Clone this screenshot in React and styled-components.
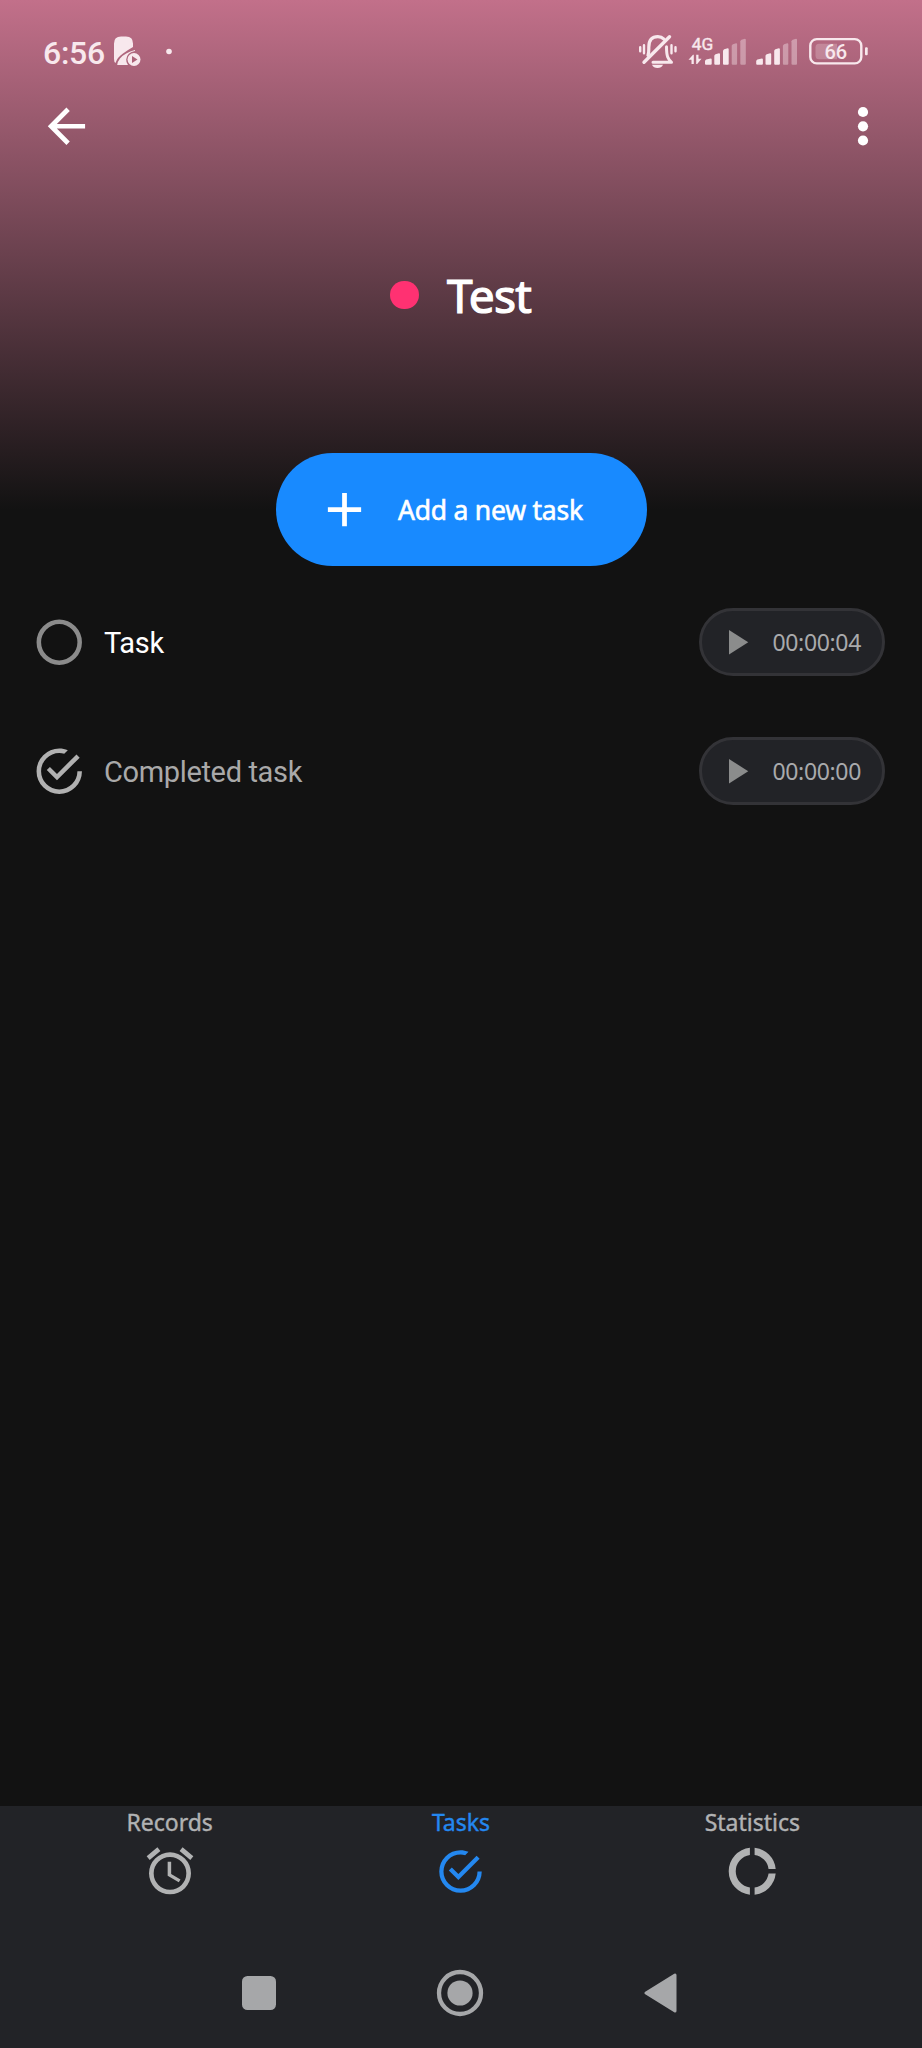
import React from "react";
import styled, { createGlobalStyle } from "styled-components";

const GlobalStyle = createGlobalStyle`
  * { box-sizing: border-box; }
  body { margin: 0; background: #121212; }
  svg { display: block; flex: none; }
`;

const sans = `"Noto Sans", "Open Sans", sans-serif`;
const roboto = `Roboto, "Liberation Sans", sans-serif`;

const Screen = styled.div`
  width: 922px;
  height: 2048px;
  display: flex;
  flex-direction: column;
  overflow: hidden;
  background: linear-gradient(#c2708a 0, #121212 510px);
  font-family: ${sans};
`;

const StatusBar = styled.header`
  height: 102px;
  padding: 0 53px 0 43px;
  display: flex;
  align-items: center;
  justify-content: space-between;
`;

const StatusGroup = styled.div`
  display: flex;
  align-items: center;
`;

const Clock = styled.span`
  width: 71px;
  font: 500 32px/40px ${roboto};
  letter-spacing: -0.3px;
  color: #f8e8ed;
  padding-top: 3px;
`;

const StatusText = styled.text`
  font-family: ${roboto};
  font-size: ${(p) => p.$size}px;
  font-weight: ${(p) => p.$weight};
  fill: #f8e8ed;
`;

const AppBar = styled.nav`
  height: 48px;
  padding: 0 31px 0 38px;
  display: flex;
  align-items: center;
  justify-content: space-between;
`;

const IconButton = styled.button`
  display: flex;
  padding: 0;
  border: 0;
  background: none;
  color: #fff;
`;

const TitleRow = styled.div`
  height: 290px;
  margin-bottom: 13px;
  display: flex;
  align-items: center;
  padding-left: 390px;
  gap: 28.5px;
`;

const ProjectDot = styled.span`
  width: 28.5px;
  height: 28.5px;
  border-radius: 50%;
  background: #ff3172;
`;

const Title = styled.h1`
  margin: 0;
  font-size: 46px;
  line-height: 60px;
  font-weight: 400;
  letter-spacing: -0.7px;
  color: #fff;
  -webkit-text-stroke: 1.2px #fff;
`;

const AddButton = styled.button`
  align-self: center;
  width: 371px;
  height: 113px;
  padding: 0 0 0 40px;
  display: flex;
  align-items: center;
  gap: 25.5px;
  border: 0;
  border-radius: 57px;
  background: #188aff;
  color: #fff;
  font: 400 26.5px/36px ${sans};
  letter-spacing: -0.22px;
  -webkit-text-stroke: 0.6px #fff;
`;

const TaskList = styled.ul`
  flex: 1;
  list-style: none;
  margin: 0;
  padding: 12px 37px 0 32px;
`;

const TaskRow = styled.li`
  height: 129px;
  display: flex;
  align-items: center;
`;

const TaskName = styled.span`
  flex: 1;
  margin-left: 17.5px;
  font: 400 29px/36px ${roboto};
  letter-spacing: -0.35px;
  color: ${(p) => (p.$done ? "#a9a9a9" : "#fff")};
`;

const Timer = styled.button`
  width: 186px;
  height: 68px;
  margin-bottom: 1px;
  padding: 0 0 0 13px;
  display: flex;
  align-items: center;
  gap: 15.5px;
  border: 3px solid #333337;
  border-radius: 34px;
  background: #222327;
  color: #a9aaac;
  font: 400 23px/30px ${sans};
  letter-spacing: -0.35px;
`;

const Tabs = styled.nav`
  height: 136px;
  padding: 0 24px;
  display: flex;
  background: #222327;
`;

const Tab = styled.a`
  flex: 1;
  display: flex;
  flex-direction: column;
  align-items: center;
  color: ${(p) => (p.$active ? "#2488f0" : "#b1b2b3")};
`;

const TabLabel = styled.span`
  height: 31px;
  font-size: 23px;
  line-height: 32px;
  -webkit-text-stroke: 0.4px currentColor;
`;

const TabIcon = styled.span`
  height: 68px;
  display: flex;
  align-items: center;
`;

const SystemBar = styled.footer`
  height: 106px;
  padding: 0 245px 5px 242px;
  display: flex;
  align-items: center;
  justify-content: space-between;
  background: #222327;
  color: #a6a7a9;
`;

const paths = {
  back: "M20,11V13H8L13.5,18.5L12.08,19.92L4.16,12L12.08,4.08L13.5,5.5L8,11H20Z",
  plus: "M19,13H13V19H11V13H5V11H11V5H13V11H19V13Z",
  open: "M12,20A8,8 0 0,1 4,12A8,8 0 0,1 12,4A8,8 0 0,1 20,12A8,8 0 0,1 12,20M12,2A10,10 0 0,0 2,12A10,10 0 0,0 12,22A10,10 0 0,0 22,12A10,10 0 0,0 12,2Z",
  done: "M20,12A8,8 0 0,1 12,20A8,8 0 0,1 4,12A8,8 0 0,1 12,4C12.76,4 13.5,4.11 14.2,4.31L15.77,2.74C14.61,2.26 13.34,2 12,2A10,10 0 0,0 2,12A10,10 0 0,0 12,22A10,10 0 0,0 22,12M7.91,10.08L6.5,11.5L11,16L21,6L19.59,4.58L11,13.17L7.91,10.08Z",
  play: "M8,5.14V19.14L19,12.14L8,5.14Z",
  alarm: "M12,20A7,7 0 0,1 5,13A7,7 0 0,1 12,6A7,7 0 0,1 19,13A7,7 0 0,1 12,20M12,4A9,9 0 0,0 3,13A9,9 0 0,0 12,22A9,9 0 0,0 21,13A9,9 0 0,0 12,4M12.5,8H11V14L15.75,16.85L16.5,15.62L12.5,13.25V8M7.88,3.39L6.6,1.86L2,5.71L3.29,7.24L7.88,3.39M22,5.72L17.4,1.86L16.11,3.39L20.71,7.25L22,5.72Z",
  donut: "M11,2.05V5.07A7,7 0 0,0 11,18.93V21.95A10,10 0 0,1 11,2.05M13,2.05A10,10 0 0,1 21.95,11H18.93A7,7 0 0,0 13,5.07ZM13,18.93A7,7 0 0,0 18.93,13H21.95A10,10 0 0,1 13,21.95Z",
};

const Icon = ({ name, size, color = "currentColor" }) => (
  <svg width={size} height={size} viewBox="0 0 24 24" fill={color}>
    <path d={paths[name]} />
  </svg>
);

const MoreIcon = () => (
  <svg width="56" height="56" viewBox="0 0 56 56" fill="currentColor">
    <circle cx="28" cy="14" r="5.1" />
    <circle cx="28" cy="28.3" r="5.1" />
    <circle cx="28" cy="42.5" r="5.1" />
  </svg>
);

const NotificationIcons = () => (
  <svg width="62" height="36" viewBox="0 0 62 36" fill="#f8e8ed">
    <path d="M0 26V10.500Q0 3.500 7 3.500H12Q19 3.500 19 10.500V14Q14.500 16.500 9 20.500Q3.500 24 1.500 30Q0 29 0 26Z" />
    <path d="M21 17Q11 19.500 6 25.500Q3.500 28.500 3.200 32H14Q12 29.500 12.200 26.500Q13 19 21 18Z" />
    <circle cx="20" cy="26.500" r="6.500" />
    <path d="M18 23V30L23.500 26.500Z" fill="#ad6279" />
    <circle cx="55" cy="18.500" r="2.800" />
  </svg>
);

const bars = [
  [0, 20.3, 6.7],
  [9.3, 15, 5.7],
  [18, 10, 5.7],
  [26.7, 5, 5.4],
  [35.3, 0.4, 5.5],
];

const Signal = ({ x }) => (
  <g transform={`translate(${x} 5.5)`}>
    {bars.map(([left, top, w], i) => (
      <path
        key={left}
        opacity={i > 2 ? 0.4 : 1}
        d={`M${left + 1} 26.500Q${left} 26.500 ${left} 25.500V${top + 2.5}Q${left + 0.2} ${top + 1.500} ${left + 1.2} ${top + 1}L${left + w - 1} ${top}Q${left + w} ${top} ${left + w} ${top + 1}V25.500Q${left + w} 26.500 ${left + w - 1} 26.500Z`}
      />
    ))}
  </g>
);

const DeviceStatus = () => (
  <svg width="230" height="38" viewBox="0 -0.8 230 38" fill="#f8e8ed">
    <g fill="none" stroke="#f8e8ed" strokeWidth="2.600" strokeLinecap="round">
      <path d="M1.200 14.500V18.500M5 12.500V20.500M32.500 12.500V20.500M36.500 14.500V18.500" strokeWidth="2.400" />
      <path d="M9 22.500C10 20 9.800 18 9.800 14.500C9.800 7 13 3.800 18.800 3.800C21.500 3.800 23.500 4.800 25 6.300" strokeWidth="3.200" />
      <path d="M5 29.500L30.500 4" strokeWidth="3.400" />
      <path d="M14 29.500H32.500C29 26 27.500 24 27.500 14" strokeWidth="3" strokeLinejoin="round" />
    </g>
    <path d="M13 32H24Q22.500 35.300 18.500 35.300T13 32Z" />
    <StatusText x="52.800" y="17.300" $size={17.300} $weight={400} stroke="#f8e8ed" strokeWidth="0.4">4G</StatusText>
    <path d="M54.800 22V31.200H52.500V27H49.500L54 22ZM57.200 31.200V22H59.500V26H62.500L58.200 31.200Z" />
    <Signal x={66} />
    <Signal x={117.200} />
    <rect x="171.300" y="6.300" width="51" height="24.300" rx="6.500" fill="none" stroke="#f8e8ed" strokeWidth="2.400" />
    <path d="M180 11H198V26.500H180Q176.500 26.500 176.500 23V14.500Q176.500 11 180 11Z" opacity="0.25" />
    <StatusText x="185.500" y="26" $size={20} $weight={500}>66</StatusText>
    <rect x="226" y="14.500" width="2.700" height="8" rx="1" />
  </svg>
);

const tasks = [
  { name: "Task", time: "00:00:04", done: false },
  { name: "Completed task", time: "00:00:00", done: true },
];

const tabs = [
  { label: "Records", icon: "alarm", size: 56 },
  { label: "Tasks", icon: "done", size: 51, active: true },
  { label: "Statistics", icon: "donut", size: 56.5 },
];

export default function App() {
  return (
    <Screen>
      <GlobalStyle />
      <StatusBar>
        <StatusGroup>
          <Clock>6:56</Clock>
          <NotificationIcons />
        </StatusGroup>
        <DeviceStatus />
      </StatusBar>
      <AppBar>
        <IconButton aria-label="Back"><Icon name="back" size={56.5} /></IconButton>
        <IconButton aria-label="More"><MoreIcon /></IconButton>
      </AppBar>
      <TitleRow>
        <ProjectDot />
        <Title>Test</Title>
      </TitleRow>
      <AddButton>
        <Icon name="plus" size={57} />
        Add a new task
      </AddButton>
      <TaskList>
        {tasks.map((t) => (
          <TaskRow key={t.name}>
            <Icon name={t.done ? "done" : "open"} size={54.5} color={t.done ? "#b1b1b1" : "#8b8b8b"} />
            <TaskName $done={t.done}>{t.name}</TaskName>
            <Timer>
              <Icon name="play" size={42} color="#8b8c8c" />
              {t.time}
            </Timer>
          </TaskRow>
        ))}
      </TaskList>
      <Tabs>
        {tabs.map((t) => (
          <Tab key={t.label} $active={t.active}>
            <TabLabel>{t.label}</TabLabel>
            <TabIcon><Icon name={t.icon} size={t.size} /></TabIcon>
          </Tab>
        ))}
      </Tabs>
      <SystemBar>
        <svg width="34" height="34" fill="currentColor">
          <rect width="34" height="34" rx="5.500" />
        </svg>
        <svg width="48" height="48" fill="currentColor">
          <circle cx="24" cy="24" r="21" fill="none" stroke="currentColor" strokeWidth="4.300" />
          <circle cx="24" cy="24" r="12.600" />
        </svg>
        <svg width="33" height="40" fill="currentColor" stroke="currentColor" strokeWidth="3" strokeLinejoin="round">
          <path d="M2 20L31 2V38Z" />
        </svg>
      </SystemBar>
    </Screen>
  );
}
